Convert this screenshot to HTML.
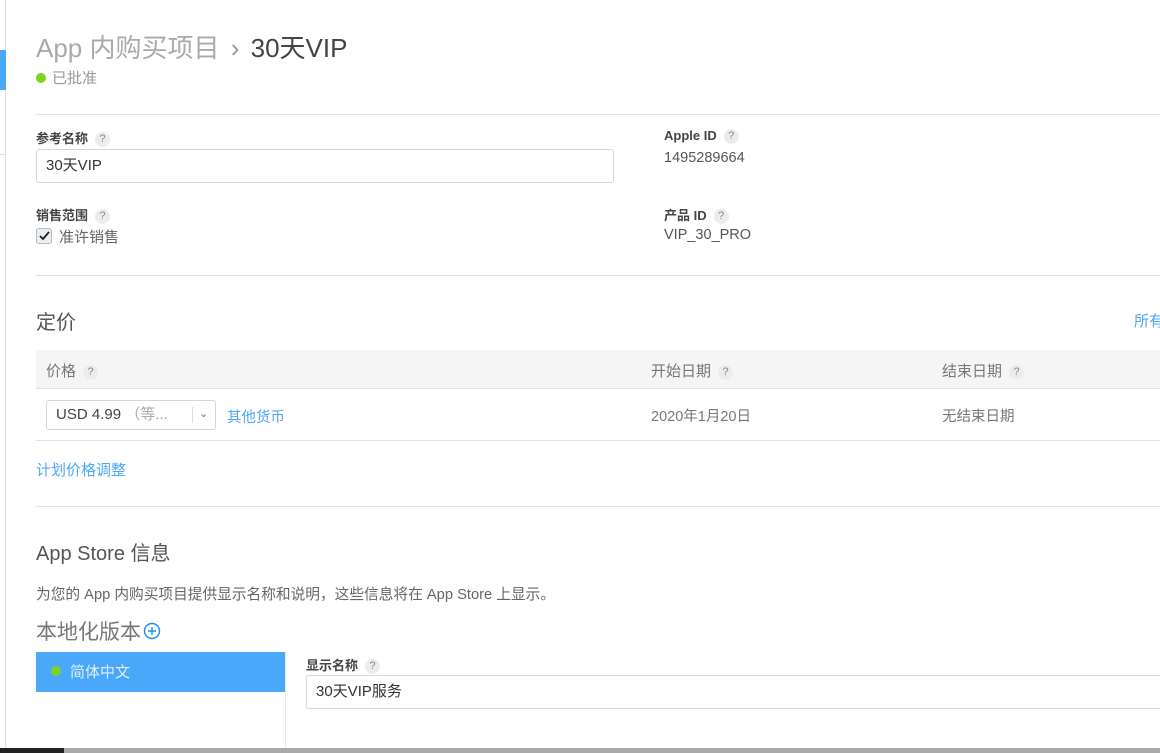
<!DOCTYPE html>
<html><head><meta charset="utf-8"><style>
*{margin:0;padding:0;box-sizing:border-box}
body{width:1160px;height:753px;overflow:hidden;background:#fff;font-family:"Liberation Sans","Noto Sans CJK SC",sans-serif;position:relative;color:#333}
.a{position:absolute;white-space:nowrap}
.q{display:inline-block;width:15px;height:15px;border-radius:50%;background:#ececec;color:#888;font-size:11px;font-weight:normal;text-align:center;line-height:15px;vertical-align:1px;margin-left:7px}
.lbl{font-size:13px;font-weight:bold;color:#444}
.hr{position:absolute;left:36px;right:0;height:1px;background:#e2e2e2}
.inp{position:absolute;border:1px solid #d6d6d6;border-radius:3px;font-size:15px;padding-left:9px;background:#fff}
.blue{color:#4fa7f2}
.g{color:#777}
</style></head><body>
<div class="a" style="left:5px;top:0;width:1px;height:748px;background:#e0e0e0"></div>
<div class="a" style="left:0;top:50px;width:6px;height:40px;background:#4aa8fa"></div>
<div class="a" style="left:0;top:154px;width:5px;height:1px;background:#ddd"></div>

<div class="a" style="left:36px;top:28px;font-size:26px;color:#aaa">App 内购买项目 <span style="color:#999;margin:0 4px">&#8250;</span> <span style="color:#444">30天VIP</span></div>
<div class="a" style="left:36px;top:67px;font-size:15px;color:#999"><span style="display:inline-block;width:10px;height:10px;border-radius:50%;background:#7ed321;margin-right:6px;vertical-align:0"></span>已批准</div>
<div class="hr" style="top:114px"></div>

<div class="a lbl" style="left:36px;top:128px">参考名称<span class="q">?</span></div>
<div class="inp" style="left:36px;top:149px;width:578px;height:34px;line-height:32px">30天VIP</div>
<div class="a lbl" style="left:664px;top:128px">Apple ID<span class="q">?</span></div>
<div class="a" style="left:664px;top:150px;font-size:14.5px;color:#555">1495289664</div>
<div class="a lbl" style="left:36px;top:205px">销售范围<span class="q">?</span></div>
<div class="a" style="left:36px;top:226px;font-size:15px;color:#666"><span style="display:inline-block;width:16px;height:16px;border:1px solid #bbb;border-radius:3px;background:#e8eef5;vertical-align:-2px;margin-right:7px;position:relative"><svg width="14" height="14" style="position:absolute;left:0;top:0"><path d="M3 7l3 3 6-7" stroke="#222" stroke-width="1.8" fill="none"/></svg></span>准许销售</div>
<div class="a lbl" style="left:664px;top:205px">产品 ID<span class="q">?</span></div>
<div class="a" style="left:664px;top:227px;font-size:14.5px;color:#555">VIP_30_PRO</div>
<div class="hr" style="top:275px"></div>

<div class="a" style="left:36px;top:306px;font-size:20px;color:#555">定价</div>
<div class="a blue" style="left:1134px;top:310px;font-size:15px">所有</div>
<div class="a" style="left:36px;top:350px;right:0;height:39px;background:#f5f5f5;border-bottom:1px solid #e0e0e0"></div>
<div class="a g" style="left:46px;top:360px;font-size:15px">价格<span class="q">?</span></div>
<div class="a g" style="left:651px;top:360px;font-size:15px">开始日期<span class="q">?</span></div>
<div class="a g" style="left:942px;top:360px;font-size:15px">结束日期<span class="q">?</span></div>
<div class="inp" style="left:46px;top:400px;width:170px;height:30px;line-height:28px;color:#444">USD 4.99 <span style="color:#aaa">（等...</span>
<span style="position:absolute;left:145px;top:6px;width:1px;height:16px;background:#ddd"></span>
<span style="position:absolute;left:152px;top:-1px;font-size:11px;color:#777">&#8964;</span></div>
<div class="a blue" style="left:227px;top:406px;font-size:14.5px">其他货币</div>
<div class="a g" style="left:651px;top:405px;font-size:14.5px">2020年1月20日</div>
<div class="a g" style="left:942px;top:405px;font-size:14.5px">无结束日期</div>
<div class="hr" style="top:440px"></div>
<div class="a blue" style="left:36px;top:459px;font-size:15px">计划价格调整</div>
<div class="hr" style="top:506px"></div>

<div class="a" style="left:36px;top:537px;font-size:20px;color:#555">App Store 信息</div>
<div class="a" style="left:36px;top:583px;font-size:14.7px;color:#666">为您的 App 内购买项目提供显示名称和说明，这些信息将在 App Store 上显示。</div>
<div class="a" style="left:36px;top:616px;font-size:21px;color:#777">本地化版本 <svg width="18" height="18" style="vertical-align:-1px;margin-left:-4px"><circle cx="9" cy="9" r="7.5" stroke="#1a8cf0" stroke-width="1.4" fill="none"/><path d="M9 5v8M5 9h8" stroke="#1a8cf0" stroke-width="1.4"/></svg></div>
<div class="a" style="left:36px;top:652px;width:249px;height:40px;background:#4aa8fa"></div>
<div class="a" style="left:51px;top:661px;font-size:15px;color:#dfefff"><span style="display:inline-block;width:10px;height:10px;border-radius:50%;background:#7ed321;margin-right:9px;vertical-align:1px"></span>简体中文</div>
<div class="a" style="left:285px;top:652px;width:1px;height:96px;background:#e8e8e8"></div>
<div class="a lbl" style="left:306px;top:655px">显示名称<span class="q">?</span></div>
<div class="inp" style="left:306px;top:675px;width:870px;height:34px;line-height:32px">30天VIP服务</div>

<div class="a" style="left:0;top:748px;width:1160px;height:5px;background:#a9a9a9"></div>
<div class="a" style="left:0;top:748px;width:64px;height:5px;background:#222"></div>
</body></html>
